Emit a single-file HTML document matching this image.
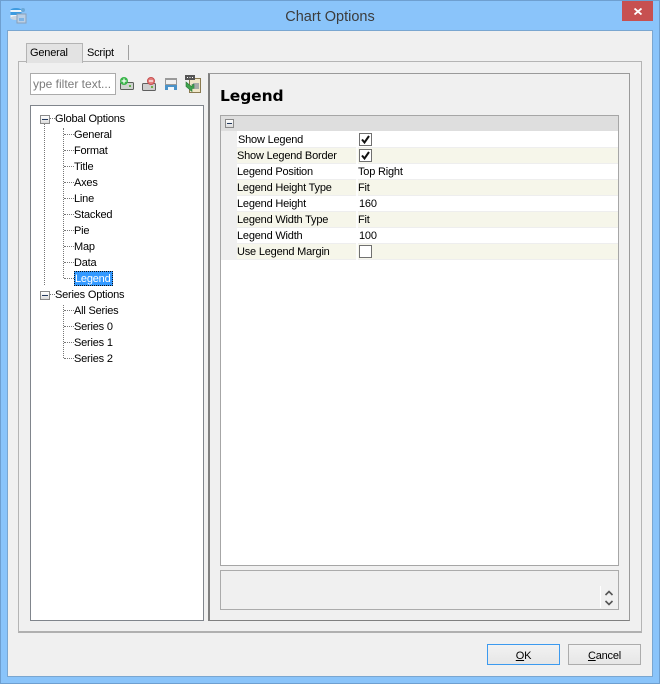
<!DOCTYPE html>
<html>
<head>
<meta charset="utf-8">
<style>
html,body{margin:0;padding:0}
body{width:660px;height:684px;overflow:hidden;position:relative;background:#8ac4fa;font-family:"Liberation Sans",sans-serif;font-size:11px;color:#000}
.a{position:absolute;box-sizing:border-box}
.t{position:absolute;white-space:nowrap;line-height:14px;height:14px;letter-spacing:-.2px}
.h{position:absolute;border-top:1px dotted #777;height:0}
.v{position:absolute;border-left:1px dotted #777;width:0}
.row{position:absolute;left:237px;width:381px;height:16px;border-bottom:1px solid #eeeeee;box-sizing:border-box}
.row.o{background:#f6f6ea}
.row.w{background:#fff}
.row i{position:absolute;left:119px;top:0;width:2px;height:16px;background:#fff;opacity:.8}
.chk{position:absolute;left:359px;width:13px;height:13px;border:1px solid #707070;background:#fff;box-sizing:border-box}
.exp{position:absolute;width:10px;height:9px;border:1px solid #8a8a8a;background:linear-gradient(#fff,#ddd);box-sizing:border-box}
.exp:after{content:"";position:absolute;left:1px;right:1px;top:3px;height:1px;background:#23395d}
u{text-decoration:underline}
</style>
</head>
<body>
<div class="a" style="left:0;top:0;width:660px;height:684px;border:1px solid #6e9fd0"></div>
<svg class="a" style="left:9px;top:7px" width="18" height="18" viewBox="0 0 18 18">
<ellipse cx="7" cy="3" rx="5.5" ry="2" fill="#3d9be0"/>
<rect x="1.5" y="3" width="11" height="8" fill="#eef4fa"/>
<rect x="1.5" y="5" width="11" height="3" fill="#3d9be0"/>
<ellipse cx="7" cy="11" rx="5.5" ry="2" fill="#c8d4e0"/>
<circle cx="14" cy="3" r="2" fill="#6aa8d8"/>
<rect x="8" y="7" width="9" height="9" fill="#b9cfe6" stroke="#8ba0b8" stroke-width="1"/>
<rect x="10" y="11" width="5" height="3" fill="#7fb4e4"/>
</svg>
<div class="t" style="left:0;width:660px;top:8px;height:18px;line-height:18px;text-align:center;font-size:14.5px;color:#3c3c3c;letter-spacing:0">Chart Options</div>
<div class="a" style="left:622px;top:1px;width:31px;height:20px;background:#c75050"></div>
<svg class="a" style="left:634px;top:8px" width="8" height="7" viewBox="0 0 8 7"><path d="M.5 .5L7.500 6.500M7.500 .5L.5 6.500" stroke="#fff" stroke-width="1.800"/></svg>

<div class="a" style="left:7px;top:30px;width:646px;height:647px;background:#f0f0f0;border:1px solid #7aa6d0"></div>

<div class="a" style="left:18px;top:61px;width:624px;height:572px;border:1px solid #b4b4b4;border-bottom:2px solid #b0b0b0;background:#f0f0f0"></div>
<div class="a" style="left:26px;top:43px;width:57px;height:20px;background:#e3e3e3;border:1px solid #b4b4b4;border-bottom:none"></div>
<div class="t" style="left:30px;top:46px">General</div>
<div class="t" style="left:87px;top:46px">Script</div>
<div class="a" style="left:128px;top:45px;width:1px;height:15px;background:#a0a0a0"></div>

<div class="a" style="left:30px;top:73px;width:86px;height:22px;background:#fff;border:1px solid #ababab"></div>
<div class="t" style="left:33px;top:77px;width:81px;overflow:hidden;color:#7c7c7c;font-size:12px;letter-spacing:0">ype filter text...</div>

<svg class="a" style="left:119px;top:76px" width="17" height="16" viewBox="0 0 17 16">
<rect x="1.500" y="6.500" width="13" height="7" rx="1" fill="#cfd3cf" stroke="#5a5f5a"/>
<rect x="10" y="9" width="2" height="2" fill="#5fb04a"/>
<circle cx="5" cy="5" r="4" fill="#3ab54a"/>
<path d="M2.500 5H7.500M5 2.500V7.500" stroke="#fff" stroke-width="1.200"/>
</svg>
<svg class="a" style="left:141px;top:76px" width="18" height="16" viewBox="0 0 18 16">
<rect x="1.500" y="7.500" width="13" height="7" rx="1" fill="#cfcfcf" stroke="#5f5f5f"/>
<rect x="10" y="10" width="2" height="2" fill="#6fb04a"/>
<circle cx="10" cy="5" r="3.500" fill="#e57f7f" stroke="#c65050"/>
<path d="M8 5H12" stroke="#fff" stroke-width="1.200"/>
</svg>
<svg class="a" style="left:165px;top:78px" width="12" height="12" viewBox="0 0 12 12">
<rect width="12" height="12" fill="#9a9a9a"/>
<rect x="1" y="2" width="10" height="4" fill="#f0f0f0"/>
<rect y="7" width="12" height="5" fill="#4a92c8"/>
<rect x="3" y="9" width="6" height="3" fill="#f0f6fb"/>
</svg>
<svg class="a" style="left:184px;top:74px" width="17" height="19" viewBox="0 0 17 19">
<rect x="5.500" y="4.500" width="11" height="14" fill="#f0e6c8" stroke="#8a7a50"/>
<path d="M9 10h6M9 12h6M9 14h6" stroke="#60708a"/>
<rect x="1" y="1" width="10" height="5" fill="#555"/>
<path d="M3 3.500h1M5.500 3.500h1M8 3.500h1" stroke="#fff"/>
<path d="M2 8l6 5v-2.500l2 0v4l-2 0v3l-6-5z" fill="#3fa34d" stroke="#2b7a38" stroke-width=".6"/>
</svg>

<div class="a" style="left:30px;top:105px;width:174px;height:516px;background:#fff;border:1px solid #80858c"></div>
<div class="v" style="left:44px;top:124px;height:161px"></div>
<div class="v" style="left:63px;top:128px;height:150px"></div>
<div class="v" style="left:63px;top:305px;height:53px"></div>
<div class="h" style="left:50px;top:118px;width:5px"></div>
<div class="h" style="left:50px;top:294px;width:5px"></div>
<div class="h" style="left:64px;top:134px;width:10px"></div>
<div class="h" style="left:64px;top:150px;width:10px"></div>
<div class="h" style="left:64px;top:166px;width:10px"></div>
<div class="h" style="left:64px;top:182px;width:10px"></div>
<div class="h" style="left:64px;top:198px;width:10px"></div>
<div class="h" style="left:64px;top:214px;width:10px"></div>
<div class="h" style="left:64px;top:230px;width:10px"></div>
<div class="h" style="left:64px;top:246px;width:10px"></div>
<div class="h" style="left:64px;top:262px;width:10px"></div>
<div class="h" style="left:64px;top:278px;width:10px"></div>
<div class="h" style="left:64px;top:310px;width:10px"></div>
<div class="h" style="left:64px;top:326px;width:10px"></div>
<div class="h" style="left:64px;top:342px;width:10px"></div>
<div class="h" style="left:64px;top:358px;width:10px"></div>
<div class="exp" style="left:40px;top:115px"></div>
<div class="exp" style="left:40px;top:291px"></div>
<div class="t" style="left:55px;top:112px">Global Options</div>
<div class="t" style="left:74px;top:128px">General</div>
<div class="t" style="left:74px;top:144px">Format</div>
<div class="t" style="left:74px;top:160px">Title</div>
<div class="t" style="left:74px;top:176px">Axes</div>
<div class="t" style="left:74px;top:192px">Line</div>
<div class="t" style="left:74px;top:208px">Stacked</div>
<div class="t" style="left:74px;top:224px">Pie</div>
<div class="t" style="left:74px;top:240px">Map</div>
<div class="t" style="left:74px;top:256px">Data</div>
<div class="a" style="left:74px;top:271px;width:39px;height:15px;background:#3399ff;border:1px dotted #111"></div>
<div class="t" style="left:75px;top:272px;color:#fff">Legend</div>
<div class="t" style="left:55px;top:288px">Series Options</div>
<div class="t" style="left:74px;top:304px">All Series</div>
<div class="t" style="left:74px;top:320px">Series 0</div>
<div class="t" style="left:74px;top:336px">Series 1</div>
<div class="t" style="left:74px;top:352px">Series 2</div>

<div class="a" style="left:208px;top:73px;width:422px;height:548px;border:1px solid #9a9a9a;border-left:2px solid #808080;border-bottom:1px solid #808080"></div>
<div class="t" style="left:220px;top:86px;height:20px;line-height:20px;font-family:'DejaVu Sans',sans-serif;font-weight:bold;font-size:15.5px;letter-spacing:-.1px">Legend</div>

<div class="a" style="left:220px;top:115px;width:399px;height:451px;background:#fff;border:1px solid #a6a6a6"></div>
<div class="a" style="left:221px;top:116px;width:397px;height:15px;background:#dedede"></div>
<div class="a" style="left:221px;top:131px;width:16px;height:129px;background:#efefef"></div>
<div class="exp" style="left:225px;top:119px;width:9px"></div>

<div class="row w" style="top:132px"><i></i></div>
<div class="row o" style="top:148px"><i></i></div>
<div class="row w" style="top:164px"><i></i></div>
<div class="row o" style="top:180px"><i></i></div>
<div class="row w" style="top:196px"><i></i></div>
<div class="row o" style="top:212px"><i></i></div>
<div class="row w" style="top:228px"><i></i></div>
<div class="row o" style="top:244px"><i></i></div>

<div class="t" style="left:238px;top:133px">Show Legend</div>
<div class="t" style="left:237px;top:149px">Show Legend Border</div>
<div class="t" style="left:237px;top:165px">Legend Position</div>
<div class="t" style="left:237px;top:181px">Legend Height Type</div>
<div class="t" style="left:237px;top:197px">Legend Height</div>
<div class="t" style="left:237px;top:213px">Legend Width Type</div>
<div class="t" style="left:237px;top:229px">Legend Width</div>
<div class="t" style="left:237px;top:245px">Use Legend Margin</div>

<div class="chk" style="top:133px"><svg width="11" height="11" viewBox="0 0 11 11" style="display:block"><path d="M2 5.500L4.500 8.500L9 2" fill="none" stroke="#111" stroke-width="2"/></svg></div>
<div class="chk" style="top:149px"><svg width="11" height="11" viewBox="0 0 11 11" style="display:block"><path d="M2 5.500L4.500 8.500L9 2" fill="none" stroke="#111" stroke-width="2"/></svg></div>
<div class="t" style="left:358px;top:165px">Top Right</div>
<div class="t" style="left:358px;top:181px">Fit</div>
<div class="t" style="left:359px;top:197px">160</div>
<div class="t" style="left:358px;top:213px">Fit</div>
<div class="t" style="left:359px;top:229px">100</div>
<div class="chk" style="top:245px"></div>

<div class="a" style="left:220px;top:570px;width:399px;height:40px;border:1px solid #ababab;background:#f0f0f0"></div>
<div class="a" style="left:600px;top:586px;width:1px;height:22px;background:#fff"></div>
<svg class="a" style="left:604px;top:589px" width="10" height="18" viewBox="0 0 10 18">
<path d="M1.500 6L5 2.500L8.500 6M1.500 12L5 15.500L8.500 12" fill="none" stroke="#555" stroke-width="1.600"/>
</svg>

<div class="a" style="left:487px;top:644px;width:73px;height:21px;border:1px solid #3c9aef;background:linear-gradient(#f2f2f2,#e6e6e6)"></div>
<div class="t" style="left:487px;width:73px;top:649px;text-align:center"><u>O</u>K</div>
<div class="a" style="left:568px;top:644px;width:73px;height:21px;border:1px solid #acacac;background:linear-gradient(#f2f2f2,#e6e6e6)"></div>
<div class="t" style="left:568px;width:73px;top:649px;text-align:center"><u>C</u>ancel</div>
</body>
</html>
